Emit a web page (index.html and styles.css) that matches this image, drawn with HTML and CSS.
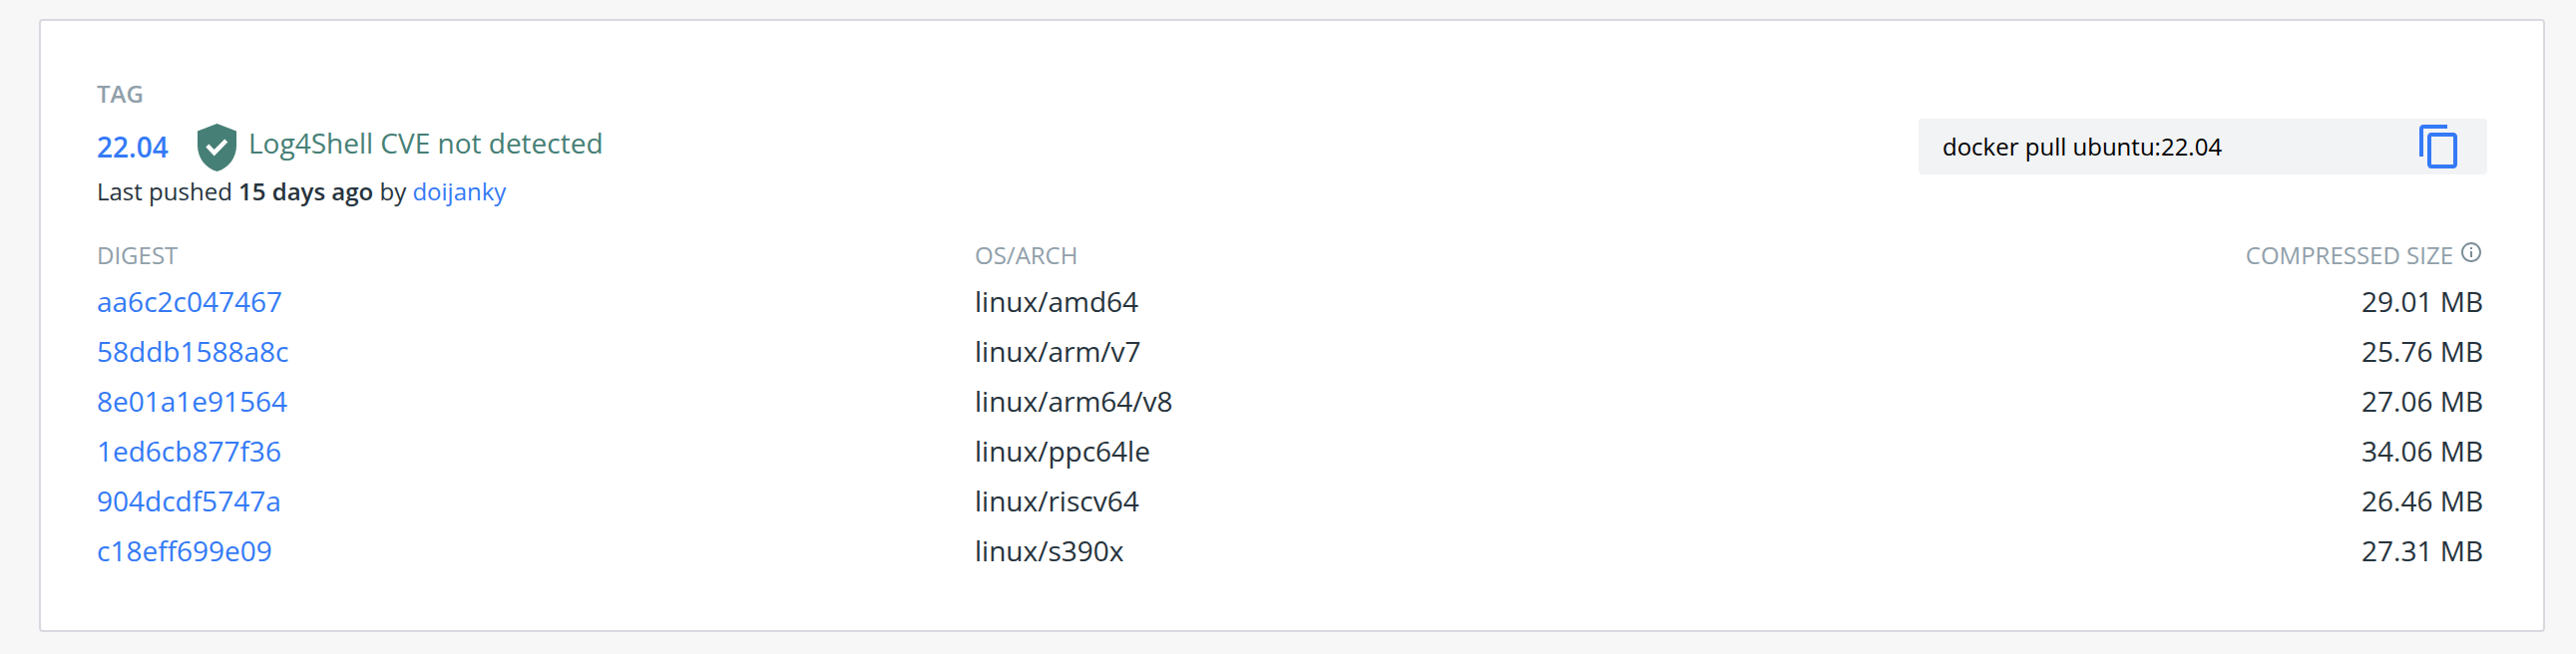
FILE: index.html
```html
<!DOCTYPE html>
<html lang="en">
<head>
<meta charset="utf-8">
<title>ubuntu:22.04</title>
<link rel="stylesheet" href="styles.css">
</head>
<body>
<main class="card">
  <header class="head">
    <div class="info">
      <div class="label tag-label">TAG</div>
      <div class="tag-row">
        <a class="tag">22.04</a>
        <svg class="shield" viewBox="0 0 39 48"><path fill="#467f76" d="M19.5 0L39 7.4V22C39 34 31 45 19.5 48C8 45 0 34 0 22V7.4Z"/><path fill="#fff" d="M8.3 23.5L11.4 20.6L16.7 26L27.2 15.5L30.3 18.4L16.7 32.4Z"/></svg>
        <span class="cve">Log4Shell CVE not detected</span>
      </div>
      <div class="pushed">Last pushed <b>15 days ago</b> by <a>doijanky</a></div>
    </div>
    <div class="pull">
      <span class="command">docker pull ubuntu:22.04</span>
      <svg class="copy" viewBox="0 0 24 24"><path d="M16 1H4c-1.1 0-2 .9-2 2v14h2V3h12V1zm3 4H8c-1.1 0-2 .9-2 2v14c0 1.1.9 2 2 2h11c1.1 0 2-.9 2-2V7c0-1.1-.9-2-2-2zm0 16H8V7h11v14z"/></svg>
    </div>
  </header>
  <section class="grid">
    <div class="label">DIGEST</div><div class="label">OS/ARCH</div>
    <div class="label size-label"><span>COMPRESSED SIZE</span><svg class="hint" viewBox="0 0 24 24"><path d="M11 7h2v2h-2zm0 4h2v6h-2zm1-9C6.48 2 2 6.48 2 12s4.48 10 10 10 10-4.48 10-10S17.52 2 12 2zm0 18c-4.41 0-8-3.59-8-8s3.59-8 8-8 8 3.59 8 8-3.59 8-8 8z"/></svg></div>
    <a>aa6c2c047467</a><span>linux/amd64</span><span class="size">29.01 MB</span>
    <a>58ddb1588a8c</a><span>linux/arm/v7</span><span class="size">25.76 MB</span>
    <a>8e01a1e91564</a><span>linux/arm64/v8</span><span class="size">27.06 MB</span>
    <a>1ed6cb877f36</a><span>linux/ppc64le</span><span class="size">34.06 MB</span>
    <a>904dcdf5747a</a><span>linux/riscv64</span><span class="size">26.46 MB</span>
    <a>c18eff699e09</a><span>linux/s390x</span><span class="size">27.31 MB</span>
  </section>
</main>
</body>
</html>
```
FILE: styles.css
```css
* { box-sizing: border-box; }
html { height: 100%; overflow: hidden; }
body {
  margin: 0;
  padding: 19px 31px 22px 39px;
  height: 100%;
  background: #f7f7f8;
  color: #27343d;
  font: 28px/50px "Open Sans", sans-serif;
}
a { color: #347af6; }
svg { display: block; flex: none; }
.card {
  height: 615px;
  padding: 53px 56px 0;
  background: #fff;
  border: 2px solid #d8d8e0;
  border-radius: 4px;
}
.head { display: flex; justify-content: space-between; height: 156px; }
.label { font-size: 24px; line-height: 39px; color: #90a0aa; }
.tag-label { font-weight: 600; }
.tag-row { display: flex; height: 58px; margin-top: 1px; }
.tag { width: 101px; padding-top: 8px; font-weight: 600; }
.shield { width: 39px; height: 48px; margin-top: 10px; }
.cve { margin-left: 12px; padding-top: 4px; color: #467f76; }
.pushed { font-size: 24px; line-height: 39px; }
.pushed b { font-weight: 600; }
.pull {
  display: flex;
  align-items: center;
  justify-content: space-between;
  width: 570px;
  height: 56px;
  margin-top: 45px;
  padding: 0 24px;
  background: #f2f3f5;
  border-radius: 4px;
  color: #000;
  font-size: 24px;
}
.command { padding-bottom: 1px; line-height: 49px; }
.copy { width: 48px; height: 48px; fill: #347af6; }
.grid {
  display: grid;
  grid-template-columns: 880px 1fr 632px;
  grid-template-rows: 47px;
  grid-auto-rows: 50px;
  padding-right: 4px;
}
.grid .label { padding-top: 6px; }
.size { text-align: right; }
.size-label { display: flex; justify-content: flex-end; gap: 6px; }
.hint { width: 24px; height: 24px; margin-top: 5px; fill: #7c8e99; }
```
